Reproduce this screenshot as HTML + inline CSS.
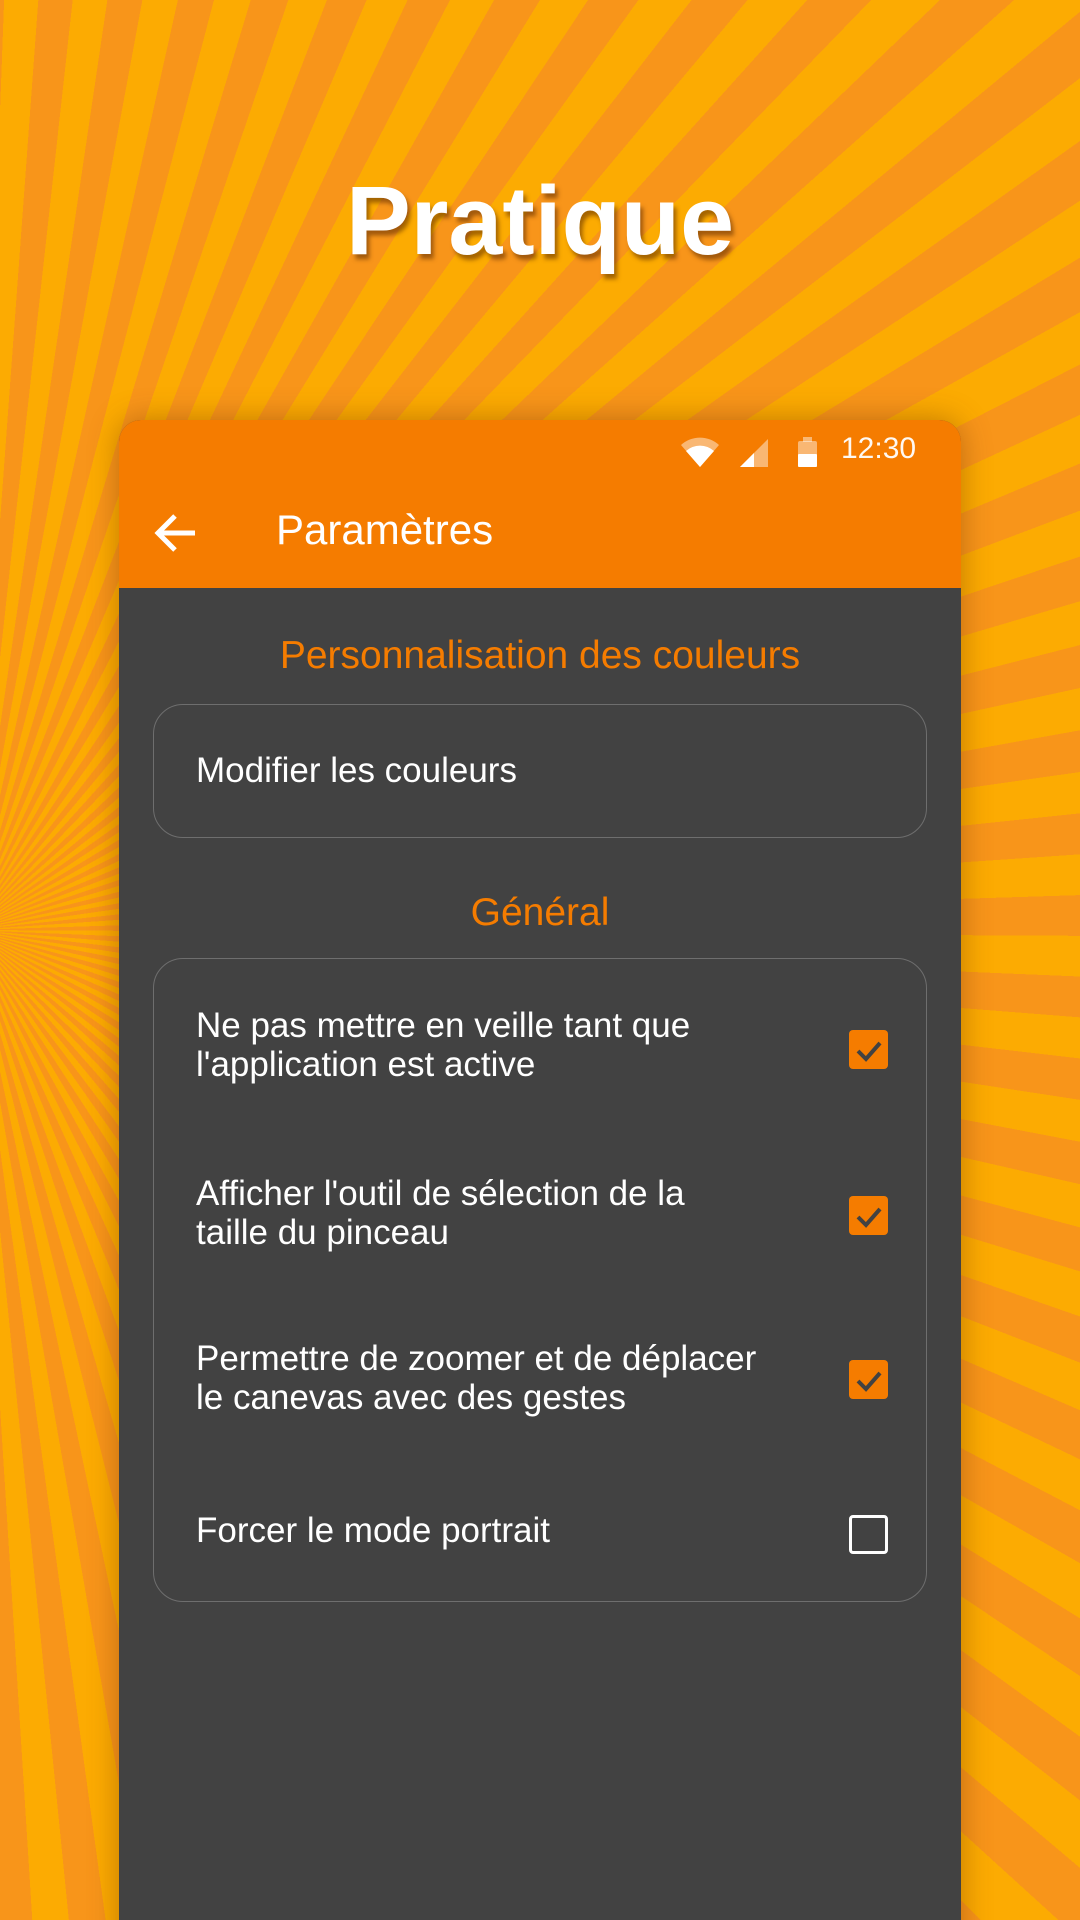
<!DOCTYPE html>
<html><head><meta charset="utf-8"><style>
*{margin:0;padding:0;box-sizing:border-box}
html,body{width:1080px;height:1920px;overflow:hidden}
body{position:relative;font-family:"Liberation Sans",sans-serif;background:#f9a00e}
.bg{position:absolute;left:0;top:0;width:1080px;height:1920px;
background:conic-gradient(from 0deg at -30px 930px,#f8951a 0deg 2.1deg,#fcab02 2.1deg 4.2deg,#f8951a 4.2deg 6.3deg,#fcab02 6.3deg 8.4deg,#f8951a 8.4deg 10.5deg,#fcab02 10.5deg 12.6deg,#f8951a 12.6deg 14.7deg,#fcab02 14.7deg 16.8deg,#f8951a 16.8deg 18.9deg,#fcab02 18.9deg 21deg,#f8951a 21deg 23.1deg,#fcab02 23.1deg 25.2deg,#f8951a 25.2deg 27.3deg,#fcab02 27.3deg 29.4deg,#f8951a 29.4deg 31.5deg,#fcab02 31.5deg 33.6deg,#f8951a 33.6deg 35.7deg,#fcab02 35.7deg 37.8deg,#f8951a 37.8deg 39.9deg,#fcab02 39.9deg 42deg,#f8951a 42deg 44.1deg,#fcab02 44.1deg 46.2deg,#f8951a 46.2deg 48.3deg,#fcab02 48.3deg 50.4deg,#f8951a 50.4deg 52.5deg,#fcab02 52.5deg 54.6deg,#f8951a 54.6deg 56.7deg,#fcab02 56.7deg 58.8deg,#f8951a 58.8deg 60.9deg,#fcab02 60.9deg 63deg,#f8951a 63deg 65.1deg,#fcab02 65.1deg 67.2deg,#f8951a 67.2deg 69.3deg,#fcab02 69.3deg 71.4deg,#f8951a 71.4deg 73.5deg,#fcab02 73.5deg 75.6deg,#f8951a 75.6deg 77.7deg,#fcab02 77.7deg 79.8deg,#f8951a 79.8deg 81.9deg,#fcab02 81.9deg 84deg,#f8951a 84deg 86.1deg,#fcab02 86.1deg 88.2deg,#f8951a 88.2deg 90.3deg,#fcab02 90.3deg 92.4deg,#f8951a 92.4deg 94.5deg,#fcab02 94.5deg 96.6deg,#f8951a 96.6deg 98.7deg,#fcab02 98.7deg 100.8deg,#f8951a 100.8deg 102.9deg,#fcab02 102.9deg 105deg,#f8951a 105deg 107.1deg,#fcab02 107.1deg 109.2deg,#f8951a 109.2deg 111.3deg,#fcab02 111.3deg 113.4deg,#f8951a 113.4deg 115.5deg,#fcab02 115.5deg 117.6deg,#f8951a 117.6deg 119.7deg,#fcab02 119.7deg 121.8deg,#f8951a 121.8deg 123.9deg,#fcab02 123.9deg 126deg,#f8951a 126deg 128.1deg,#fcab02 128.1deg 130.2deg,#f8951a 130.2deg 132.3deg,#fcab02 132.3deg 134.4deg,#f8951a 134.4deg 136.5deg,#fcab02 136.5deg 138.6deg,#f8951a 138.6deg 140.7deg,#fcab02 140.7deg 142.8deg,#f8951a 142.8deg 144.9deg,#fcab02 144.9deg 147deg,#f8951a 147deg 149.1deg,#fcab02 149.1deg 151.2deg,#f8951a 151.2deg 153.3deg,#fcab02 153.3deg 155.4deg,#f8951a 155.4deg 157.5deg,#fcab02 157.5deg 159.6deg,#f8951a 159.6deg 161.7deg,#fcab02 161.7deg 163.8deg,#f8951a 163.8deg 165.9deg,#fcab02 165.9deg 168deg,#f8951a 168deg 170.1deg,#fcab02 170.1deg 172.2deg,#f8951a 172.2deg 174.3deg,#fcab02 174.3deg 176.4deg,#f8951a 176.4deg 178.5deg,#fcab02 178.5deg 180.6deg,#f8951a 180.6deg 360deg)}
.title{position:absolute;left:0;width:1080px;top:165px;text-align:center;color:#fff;font-weight:bold;font-size:97px;text-shadow:3px 5px 4px rgba(90,40,0,.55)}
.card{position:absolute;left:119px;top:420px;width:842px;height:1560px;background:#424242;border-radius:22px 22px 0 0;overflow:hidden;box-shadow:0 0 30px rgba(120,60,0,.45)}
.hdr{position:absolute;left:0;top:0;width:100%;height:168px;background:#f57c00}
.time{position:absolute;left:722px;top:12px;color:#fff;font-size:30px;opacity:.95}
.ptitle{position:absolute;left:157px;top:86px;color:#fff;font-size:42px}
.sec{position:absolute;left:0;width:100%;text-align:center;color:#f57c00;font-size:39px}
.box{position:absolute;left:34px;width:774px;border:1.5px solid #6e6e6e;border-radius:30px}
.t{position:absolute;left:77px;color:#fff;font-size:35px;line-height:39px}
.cb{position:absolute;left:730px;width:39px;height:39px;border-radius:4px;background:#f57c00}
.cb.off{background:none;border:3px solid #fff}
</style></head><body>
<div class="bg"></div>
<div class="title">Pratique</div>
<div class="card">
 <div class="hdr">
  <svg style="position:absolute;left:560px;top:15px" width="300" height="40">
   <path d="M21 32 L2 10 A28 28 0 0 1 40 10 Z" fill="#fff" opacity=".45"/>
   <path d="M21 32 L7 16 A21 21 0 0 1 35 16 Z" fill="#fff"/>
   <path d="M61 32 L89 4 L89 32 Z" fill="#fff" opacity=".45"/>
   <path d="M61 32 L75 18 L75 32 Z" fill="#fff"/>
   <rect x="119" y="6" width="19" height="26" rx="2" fill="#fff" opacity=".45"/>
   <rect x="124" y="2" width="9" height="5" fill="#fff" opacity=".45"/>
   <rect x="119" y="19" width="19" height="13" rx="1" fill="#fff"/>
  </svg>
  <div class="time">12:30</div>
  <svg style="position:absolute;left:34px;top:91px" width="44" height="44" viewBox="0 0 44 44"><path d="M42 22H6M22 5L5 22L22 39" fill="none" stroke="#fff" stroke-width="5"/></svg>
  <div class="ptitle">Paramètres</div>
 </div>
 <div class="sec" style="top:214px">Personnalisation des couleurs</div>
 <div class="box" style="top:284px;height:134px"></div>
 <div class="t" style="top:331px">Modifier les couleurs</div>
 <div class="sec" style="top:471px">Général</div>
 <div class="box" style="top:538px;height:644px"></div>
 <div class="t" style="top:586px">Ne pas mettre en veille tant que<br>l'application est active</div>
 <div class="cb" style="top:610px"><svg width="39" height="39"><path d="M9 21l8 8 14-16" fill="none" stroke="#424242" stroke-width="4"/></svg></div>
 <div class="t" style="top:754px">Afficher l'outil de sélection de la<br>taille du pinceau</div>
 <div class="cb" style="top:776px"><svg width="39" height="39"><path d="M9 21l8 8 14-16" fill="none" stroke="#424242" stroke-width="4"/></svg></div>
 <div class="t" style="top:919px">Permettre de zoomer et de déplacer<br>le canevas avec des gestes</div>
 <div class="cb" style="top:940px"><svg width="39" height="39"><path d="M9 21l8 8 14-16" fill="none" stroke="#424242" stroke-width="4"/></svg></div>
 <div class="t" style="top:1091px">Forcer le mode portrait</div>
 <div class="cb off" style="top:1095px"></div>
</div>
</body></html>
